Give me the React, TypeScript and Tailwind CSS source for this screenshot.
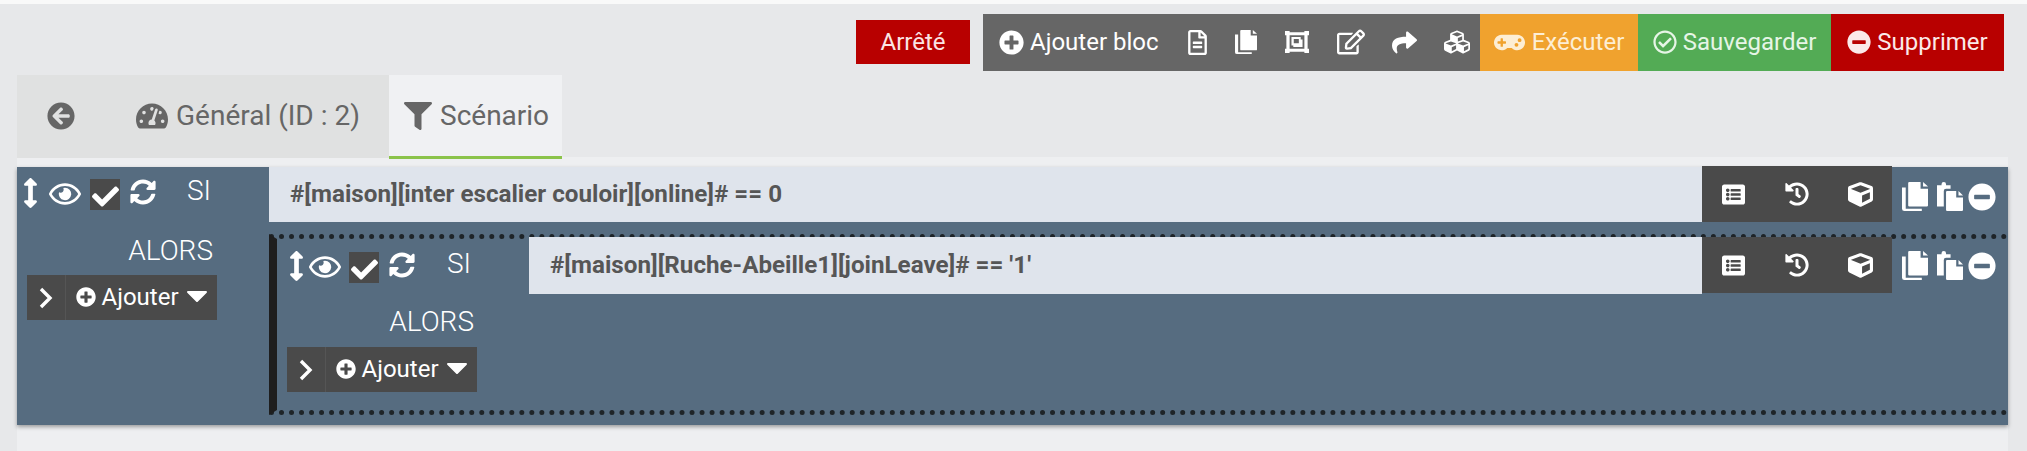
import React from 'react';
import {
  FaPlusCircle, FaRegFileAlt, FaRegEdit, FaShare, FaCubes, FaGamepad,
  FaRegCheckCircle, FaMinusCircle, FaArrowCircleLeft, FaTachometerAlt, FaFilter, FaListAlt,
  FaHistory, FaCube, FaCheck, FaSyncAlt, FaRegEye, FaArrowsAltV,
} from 'react-icons/fa';

function Files({ className }: { className?: string }) {
  return (
    <svg viewBox="2 1 21 26" preserveAspectRatio="none" className={className} fill="currentColor">
      <path d="M8 1h9v6h6v15a1 1 0 0 1-1 1H8a1 1 0 0 1-1-1V2a1 1 0 0 1 1-1z" />
      <path d="M19 1l4 4h-4z" />
      <path d="M5 6v19h13v2H4a2 2 0 0 1-2-2V6z" />
    </svg>
  );
}

function Paste({ className }: { className?: string }) {
  return (
    <svg viewBox="1 1 23 26" preserveAspectRatio="none" className={className} fill="currentColor">
      <path d="M1 4h4V3a2 2 0 0 1 4 0v1h4v3H9a2 2 0 0 0-2 2v14H1z" />
      <path d="M10 9h8v6h6v11a1 1 0 0 1-1 1H10a1 1 0 0 1-1-1V10a1 1 0 0 1 1-1z" />
      <path d="M20 9l4 4h-4z" />
    </svg>
  );
}

function Ungroup({ className }: { className?: string }) {
  return (
    <svg viewBox="0 0 26 26" preserveAspectRatio="none" className={className} fill="currentColor">
      <path fillRule="evenodd" d="M0 0h5v1.500h16V0h5v5h-1.500v16H26v5h-5v-1.500H5V26H0v-5h1.500V5H0zM5 5v16h16V5z" />
      <path fillRule="evenodd" d="M7 7h10v3h2v9H9v-2H7zM9.500 9.500v5H15v-5z" />
    </svg>
  );
}

function Chevron({ className }: { className?: string }) {
  return (
    <svg viewBox="0 0 14 22" className={className} fill="none" stroke="currentColor" strokeWidth="3.4" strokeLinejoin="miter">
      <path d="M2 2l9 9-9 9" />
    </svg>
  );
}

function Caret({ className }: { className?: string }) {
  return (
    <svg viewBox="0 0 20 11" className={className} fill="currentColor">
      <path d="M1 0h18a1 1 0 0 1 .7 1.700l-9 9a1 1 0 0 1-1.400 0l-9-9A1 1 0 0 1 1 0z" />
    </svg>
  );
}

function Segment({ className, children }: { className: string; children: React.ReactNode }) {
  return <div className={`flex items-center justify-center h-full pb-[1px] ${className}`}>{children}</div>;
}

function AddButton() {
  return (
    <div className="flex h-[45px] w-[190px] bg-[#4a4a4a] text-white text-[24px] items-stretch">
      <div className="w-[39px] flex items-center justify-center border-r border-[#555]">
        <Chevron className="w-[14px] h-[22px]" />
      </div>
      <div className="flex-1 flex items-center justify-center gap-[5px] pb-[2px]">
        <FaPlusCircle className="text-[20px]" />
        <span>Ajouter</span>
        <Caret className="w-[20px] h-[11px] ml-[3px]" />
      </div>
    </div>
  );
}

function RowHead({ si, nested }: { si: string; nested?: boolean }) {
  return (
    <div className={`flex items-start text-white w-[252px] ${nested ? 'pl-[11px] pt-[3px]' : 'pl-[5px]'}`}>
      <FaArrowsAltV className="text-[30px] mt-[11px] w-[17px] shrink-0" />
      <FaRegEye className={`text-[32px] mt-[11px] shrink-0 ${nested ? 'ml-[4px]' : 'ml-[10px]'}`} />
      <div className={`w-[30px] h-[31px] bg-[#4a4a4a] mt-[12px] flex items-center justify-center shrink-0 ${nested ? 'ml-[8px]' : 'ml-[9px]'}`}>
        <FaCheck className="text-[27px] mt-[3px]" />
      </div>
      <FaSyncAlt className="text-[26px] ml-[10px] mt-[12px] shrink-0" />
      <span className={`text-[28px] font-light leading-[32px] mt-[8px] ${nested ? 'ml-[32px]' : 'ml-[31px]'}`}>{si}</span>
    </div>
  );
}

function Actions({ nested }: { nested?: boolean }) {
  return (
    <>
      <div className={`w-[190px] h-[56px] bg-[#4a4a4a] text-white flex items-center shrink-0 ${nested ? '' : '-mt-[1px]'}`}>
        <div className="w-[63px] flex justify-center"><FaListAlt className="text-[23px]" /></div>
        <div className="w-[64px] flex justify-center"><FaHistory className="text-[24px]" /></div>
        <div className="w-[63px] flex justify-center"><FaCube className="text-[25px]" /></div>
      </div>
      <div className={`w-[116px] shrink-0 flex items-start text-white pl-[10px] ${nested ? 'pt-[14px]' : 'pt-[15px]'}`}>
        <Files className="w-[26px] h-[29px]" />
        <Paste className="w-[26px] h-[29px] ml-[9px]" />
        <FaMinusCircle className="text-[28px] ml-[5px] mt-[1px]" />
      </div>
    </>
  );
}

function ExprInput({ text, nested }: { text: string; nested?: boolean }) {
  return (
    <div className={`flex-1 min-w-0 bg-[#dfe4ec] flex items-center pl-[21px] text-[#565656] font-bold text-[24.2px] ${nested ? 'h-[57px]' : 'h-[55px]'}`}>{text}</div>
  );
}

export default function App() {
  return (
    <div className="w-[2027px] h-[451px] overflow-hidden bg-[#e7e8ea] font-['Roboto',sans-serif]">
      <div className="h-[4px] bg-[#f9f9f9]" />
      <div className="flex justify-end items-start pt-[10px] pr-[23px] text-white text-[24px] h-[71px]">
        <div className="mt-[6px] w-[114px] h-[44px] bg-[#b80000] text-[#fbe4e4] flex items-center justify-center mr-[13px]">Arrêté</div>
        <div className="h-[57px] flex">
          <Segment className="bg-[#666666] w-[497px] justify-start pl-[16px]">
            <FaPlusCircle className="text-[25px] mr-[6px]" />
            <span>Ajouter bloc</span>
            <div className="flex items-center ml-[26px]">
              <FaRegFileAlt className="text-[25px]" />
              <Files className="w-[22px] h-[24px] ml-[25px]" />
              <Ungroup className="w-[24px] h-[22px] ml-[28px]" />
              <FaRegEdit className="text-[28px] ml-[28px]" />
              <FaShare className="text-[25px] ml-[27px]" />
              <FaCubes className="text-[26px] ml-[27px]" />
            </div>
          </Segment>
          <Segment className="bg-[#f0a22e] w-[158px] gap-[7px] text-[#fdeed4]">
            <FaGamepad className="text-[31px]" />
            <span>Exécuter</span>
          </Segment>
          <Segment className="bg-[#53ab55] w-[193px] gap-[6px] text-[#e6f5e6]">
            <FaRegCheckCircle className="text-[24px]" />
            <span>Sauvegarder</span>
          </Segment>
          <Segment className="bg-[#b80000] w-[173px] gap-[6px] text-[#fbe9e9]">
            <FaMinusCircle className="text-[24px]" />
            <span>Supprimer</span>
          </Segment>
        </div>
      </div>

      <div className="ml-[17px] mr-[19px]">
        <div className="relative z-10 -mb-[2px] flex h-[84px] text-[#666666] text-[28px]">
          <div className="w-[372px] bg-[#e0e1e1] h-[83px] flex items-center pb-[2px]">
            <FaArrowCircleLeft className="text-[28px] ml-[30px]" />
            <FaTachometerAlt className="text-[32px] ml-[61px] mr-[8px]" />
            <span>Général (ID : 2)</span>
          </div>
          <div className="w-[173px] bg-[#f0f1f3] flex items-center pl-[15px] border-b-[3px] border-[#8bc34a]">
            <FaFilter className="text-[28px] mr-[8px]" />
            <span>Scénario</span>
          </div>
        </div>
        <div className="bg-[#eeeff1] h-[302px] pt-[10px]">
          <div className="bg-[#566c80] h-[258px] shadow-[0_2px_4px_rgba(0,0,0,0.35)]">
            <div className="flex h-[55px] items-start">
              <RowHead si="SI" />
              <ExprInput text="#[maison][inter escalier couloir][online]# == 0" />
              <Actions />
            </div>
            <div className="flex items-start">
              <div className="w-[252px]">
                <div className="pr-[56px] pt-[16px] text-right text-white text-[28px] font-light leading-[26px]">ALORS</div>
                <div className="ml-[10px] mt-[11px]"><AddButton /></div>
              </div>
              <div className="flex-1 mt-[12px] h-[181px] border-t-[5px] border-b-[5px] border-l-[8px] border-dotted border-t-[#1e2428] border-b-[#1e2428] border-l-[#1e1e1e] [border-left-style:solid]">
                <div className="flex h-[57px] items-start -mt-[2px]">
                  <RowHead si="SI" nested />
                  <ExprInput text="#[maison][Ruche-Abeille1][joinLeave]# == '1'" nested />
                  <Actions nested />
                </div>
                <div className="pl-[10px]">
                  <div className="w-[190px] pr-[3px] pt-[15px] text-right text-white text-[28px] font-light leading-[26px]">ALORS</div>
                  <div className="mt-[12px]"><AddButton /></div>
                </div>
              </div>
            </div>
          </div>
        </div>
      </div>
    </div>
  );
}
